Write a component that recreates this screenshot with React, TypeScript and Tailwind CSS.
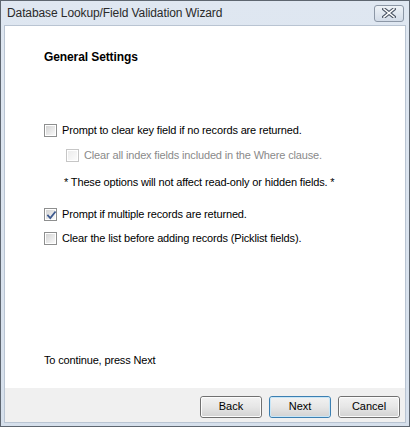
import React from 'react';

// --- Small Win7-style controls ---

const CheckBox: React.FC<{ checked?: boolean; disabled?: boolean }> = ({ checked, disabled }) => (
    <span
        className={`relative flex h-[13px] w-[13px] shrink-0 items-center justify-center border ${disabled ? 'border-[#c6c6c6]' : 'border-[#8e8f8f]'} bg-white`}
    >
        <span
            className={`h-[9px] w-[9px] ${disabled ? 'bg-gradient-to-br from-[#ececec] to-[#fbfbfb]' : 'bg-gradient-to-br from-[#d4d4d4] to-[#f9f9f9]'}`}
        />
        {checked && (
            <svg viewBox="0 0 11 11" className="absolute left-[1px] top-[1px] h-[11px] w-[11px]">
                <path d="M2 5.5 L4.3 8 L9 2.2" fill="none" stroke="#3e5a8f" strokeWidth="1.8" strokeLinecap="square" />
            </svg>
        )}
    </span>
);

const CheckRow: React.FC<{ label: string; checked?: boolean; disabled?: boolean; className?: string }> = ({ label, checked, disabled, className }) => (
    <div className={`flex h-[16px] items-center gap-[5px] ${className ?? ''}`}>
        <CheckBox checked={checked} disabled={disabled} />
        <span className={disabled ? 'text-[#8a8a8a]' : 'text-black'}>{label}</span>
    </div>
);

const WinButton: React.FC<{ children: React.ReactNode; focused?: boolean }> = ({ children, focused }) => (
    <button
        className={`relative h-[22px] w-[62px] rounded-[3px] border ${focused ? 'border-[#3c7fb1]' : 'border-[#707070]'} bg-gradient-to-b from-[#f2f2f2] via-[#e6e6e6] to-[#d2d2d2] text-[11px] text-black`}
    >
        <span className={`absolute inset-0 rounded-[2px] border ${focused ? 'border-[#c8e6f7]' : 'border-[#fcfcfc]'}`} />
        <span className="relative">{children}</span>
    </button>
);

export default function App() {
    return (
        <div className="flex h-[427px] w-[410px] flex-col border border-[#5e6670] bg-gradient-to-b from-[#dfe7f1] to-[#d6e0ec] font-['Liberation_Sans',Arial,sans-serif]">
            {/* title bar */}
            <div className="flex h-[24px] shrink-0 items-center justify-between pl-[6px] pr-[5px]">
                <span className="text-[12px] tracking-[-0.1px] text-[#2a2a2a]">Database Lookup/Field Validation Wizard</span>
                <div className="flex h-[17px] w-[30px] items-center justify-center rounded-[3px] border border-[#8c97a6] bg-gradient-to-b from-[#eef2f7] to-[#d3dce8]">
                    <svg viewBox="0 0 14 10" className="h-[10px] w-[14px]">
                        <path d="M2 1 L12 9 M12 1 L2 9" stroke="#4b5565" strokeWidth="3.6" strokeLinecap="square" />
                        <path d="M2 1 L12 9 M12 1 L2 9" stroke="#ffffff" strokeWidth="1.6" strokeLinecap="square" />
                    </svg>
                </div>
            </div>

            {/* client area */}
            <div className="mx-[3px] mb-[3px] flex flex-1 flex-col border border-[#b9c4d2]">
                <div className="flex flex-1 flex-col bg-white pb-[20px] pl-[39px] pt-[24px] text-[11px] tracking-[-0.15px] text-black">
                    <div className="h-[14px] text-[12px] font-bold leading-[14px] tracking-[-0.1px]">General Settings</div>

                    <CheckRow className="mt-[58px]" label="Prompt to clear key field if no records are returned." />
                    <CheckRow className="ml-[22px] mt-[9px]" disabled label="Clear all index fields included in the Where clause." />
                    <div className="ml-[20px] mt-[11px] flex h-[16px] items-center">* These options will not affect read-only or hidden fields. *</div>

                    <CheckRow className="mt-[16px]" checked label="Prompt if multiple records are returned." />
                    <CheckRow className="mt-[8px]" label="Clear the list before adding records (Picklist fields)." />

                    <div className="mt-auto flex h-[16px] items-center">To continue, press Next</div>
                </div>

                <div className="flex h-[34px] shrink-0 items-center justify-end gap-[7px] bg-[#f0f0f0] pr-[5px] pt-[3px]">
                    <WinButton>Back</WinButton>
                    <WinButton focused>Next</WinButton>
                    <WinButton>Cancel</WinButton>
                </div>
            </div>
        </div>
    );
}
